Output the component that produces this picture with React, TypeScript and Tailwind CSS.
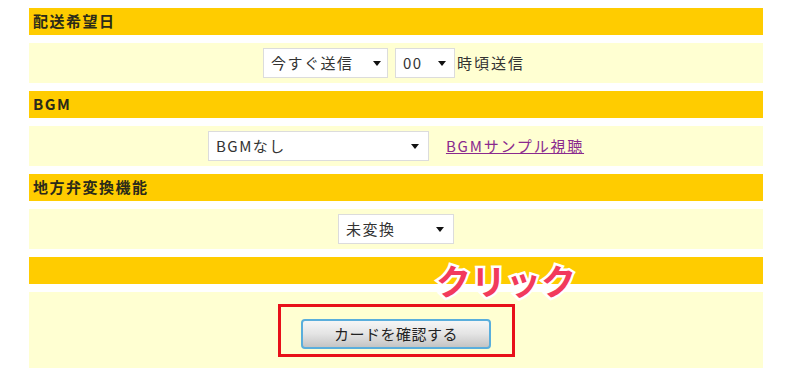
const font = "font-['Noto_Sans_CJK_JP','Liberation_Sans',sans-serif]";

function Header({ label }: { label: string }) {
  return (
    <div className={`flex h-[27px] items-center bg-[#ffcc00] pl-[4px] text-[15px] font-bold tracking-[1.5px] text-[#2a2a1a] ${font}`}>
      {label}
    </div>
  );
}

function Row({ children }: { children: React.ReactNode }) {
  return <div className="flex h-[40px] items-center justify-center bg-[#ffffd2]">{children}</div>;
}

function Arrow() {
  return <span className="h-0 w-0 border-x-[4px] border-t-[5px] border-x-transparent border-t-[#111]" />;
}

type SelectProps = { value: string; width: string; arrowGap: string };

function FakeSelect({ value, width, arrowGap }: SelectProps) {
  return (
    <div className={`flex h-[30px] ${width} items-center justify-between border border-[#dcdcdc] bg-white pl-[7px] ${arrowGap}`}>
      <span className={`text-[15px] tracking-[1.5px] text-[#333] ${font}`}>{value}</span>
      <Arrow />
    </div>
  );
}

export default function App() {
  return (
    <div className="relative h-[368px] w-[800px] overflow-hidden bg-white">
      <div className="ml-[29px] flex w-[734px] flex-col gap-[8px] pt-[8px]">
        <Header label="配送希望日" />
        <Row>
          <div className="ml-[-4px] flex items-center">
            <FakeSelect value="今すぐ送信" width="w-[125px]" arrowGap="pr-[6px]" />
            <div className="ml-[7px]">
              <FakeSelect value="00" width="w-[60px]" arrowGap="pr-[8px]" />
            </div>
            <span className={`ml-[2px] text-[15px] tracking-[2px] text-[#333] ${font}`}>時頃送信</span>
          </div>
        </Row>

        <Header label="BGM" />
        <Row>
          <div className="flex items-center">
            <FakeSelect value="BGMなし" width="w-[221px]" arrowGap="pr-[9px]" />
            <a href="#" className={`ml-[17px] text-[15px] tracking-[1.8px] text-[#8a2a8e] underline ${font}`}>
              BGMサンプル視聴
            </a>
          </div>
        </Row>

        <Header label="地方弁変換機能" />
        <Row>
          <FakeSelect value="未変換" width="w-[116px]" arrowGap="pr-[9px]" />
        </Row>

        <Header label="" />
        <div className="flex h-[76px] justify-center bg-[#ffffd2] pt-[12px]">
          <div className="flex h-[53px] w-[237px] justify-center border-[3px] border-[#e8101a] pt-[12px]">
            <button
              className={`h-[30px] w-[190px] rounded-[4px] border-2 border-[#5aaedc] bg-gradient-to-b from-[#f6f6f6] via-[#e4e4e4] to-[#c4c4c4] text-[15px] tracking-[0.5px] text-[#222] ${font}`}
            >
              カードを確認する
            </button>
          </div>
        </div>
      </div>

      <span
        className={`absolute left-[436px] top-[262px] text-[35px] font-bold leading-none tracking-[0px] text-[#f23a5c] [-webkit-text-stroke:5px_white] [paint-order:stroke_fill] ${font}`}
      >
        クリック
      </span>
    </div>
  );
}
